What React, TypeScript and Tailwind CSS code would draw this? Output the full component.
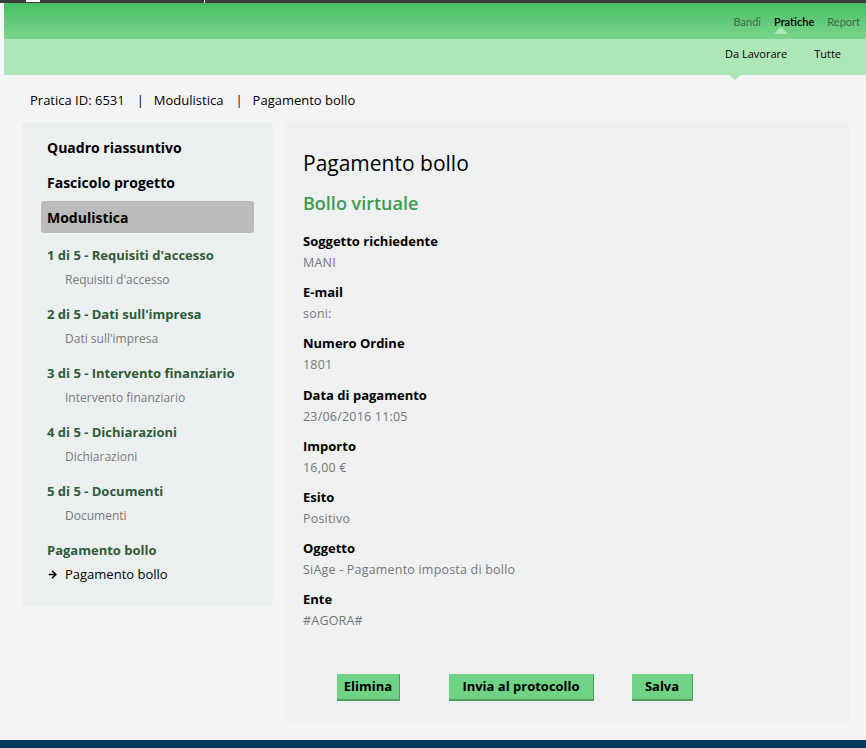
import { ArrowRight } from "lucide-react";

const font = { fontFamily: "'Open Sans', Lato, sans-serif" };

const steps = [
  { title: "1 di 5 - Requisiti d'accesso", sub: "Requisiti d'accesso" },
  { title: "2 di 5 - Dati sull'impresa", sub: "Dati sull'impresa" },
  { title: "3 di 5 - Intervento finanziario", sub: "Intervento finanziario" },
  { title: "4 di 5 - Dichiarazioni", sub: "Dichiarazioni" },
  { title: "5 di 5 - Documenti", sub: "Documenti" },
];

const fields = [
  { label: "Soggetto richiedente", value: "MANI" },
  { label: "E-mail", value: "soni:" },
  { label: "Numero Ordine", value: "1801" },
  { label: "Data di pagamento", value: "23/06/2016 11:05" },
  { label: "Importo", value: "16,00 €" },
  { label: "Esito", value: "Positivo" },
  { label: "Oggetto", value: "SiAge - Pagamento imposta di bollo" },
  { label: "Ente", value: "#AGORA#" },
];

const Header = () => (
  <header>
    {/* top dark strip */}
    <div className="relative h-[3px] bg-[#3b3d3c]">
      <div className="absolute left-[26px] top-0 h-[2px] w-[14px] bg-white" />
      <div className="absolute left-[204px] top-0 h-[6px] w-px bg-[#e8e8e8]" />
    </div>
    <div className="pl-1 bg-[#f7f7f7]">
      <div className="relative h-[36px] bg-gradient-to-b from-[#46be65] to-[#7bd58d] flex justify-end items-center pr-[6px] text-[11px]" style={{ fontFamily: "Lato, sans-serif" }}>
        <nav className="flex items-center gap-[13px] mt-[2px]">
          <a className="text-[#3d6b47]">Bandi</a>
          <a className="relative text-black font-semibold">
            Pratiche
            <span className="absolute left-[0px] top-[13px] w-0 h-0 border-l-[7px] border-r-[7px] border-b-[7px] border-l-transparent border-r-transparent border-b-[#afe6b7]" />
          </a>
          <a className="text-[#3d6b47]">Report</a>
        </nav>
      </div>
      <div className="relative h-[36px] bg-[#afe6b7] flex justify-end items-center pr-[25px] text-[11px]">
        <nav className="flex items-center gap-[27px] -mt-[6px]">
          <a className="relative text-black">
            Da Lavorare
            <span className="absolute left-[2px] top-[27px] w-0 h-0 border-l-[8px] border-r-[8px] border-t-[7px] border-l-transparent border-r-transparent border-t-[#afe6b7]" />
          </a>
          <a className="text-black">Tutte</a>
        </nav>
      </div>
    </div>
  </header>
);

const Sidebar = () => (
  <aside className="w-[251px] self-start bg-[#eceff0] rounded-[3px] px-[19px] pt-[16px] pb-[24px]">
    <div className="pl-[6px] text-[14px] font-bold text-black leading-[18px]">Quadro riassuntivo</div>
    <div className="pl-[6px] mt-[17px] text-[14px] font-bold text-black leading-[18px]">Fascicolo progetto</div>
    <div className="mt-[9px] h-[32px] bg-[#bbbbbb] rounded-[3px] flex items-center pl-[6px] text-[14px] font-bold text-black">
      Modulistica
    </div>
    <div className="pl-[6px]">
      {steps.map((s, i) => (
        <div key={s.title} className={i === 0 ? "mt-[13px]" : "mt-[16px]"}>
          <div className="text-[13px] font-bold text-[#2f5a38] leading-[18px]">{s.title}</div>
          <div className="mt-[7px] pl-[18px] text-[12px] text-[#7a7a7a] leading-[18px]">{s.sub}</div>
        </div>
      ))}
      <div className="mt-[16px]">
        <div className="text-[13px] font-bold text-[#2f5a38] leading-[18px]">Pagamento bollo</div>
        <div className="mt-[6px] flex items-center text-[13px] text-black leading-[18px]">
          <ArrowRight size={11} strokeWidth={3.5} className="mr-[7px]" />
          Pagamento bollo
        </div>
      </div>
    </div>
  </aside>
);

const Btn = ({ children, w }: { children: string; w: string }) => (
  <button
    className={`${w} h-[27px] bg-[#6fd285] border-b-2 border-r border-[#4e9e5f] text-[13px] font-bold text-black`}
  >
    {children}
  </button>
);

const Main = () => (
  <section className="w-[565px] h-[600px] bg-[#eef0f1] rounded-[3px] pl-[18px] pt-[26px] flex flex-col">
    <h1 className="text-[21px] font-medium text-black leading-[28px]">Pagamento bollo</h1>
    <h2 className="mt-[14px] text-[18px] font-semibold text-[#3f9a50] leading-[24px]">Bollo virtuale</h2>
    <div className="mt-[17px] flex flex-col gap-[12.2px]">
      {fields.map((f) => (
        <div key={f.label}>
          <div className="text-[13px] font-bold text-black leading-[18px]">{f.label}</div>
          <div className="mt-[4px] text-[12.5px] tracking-[0.2px] text-[#777] leading-[17px]">{f.value}</div>
        </div>
      ))}
    </div>
    <div className="mt-[45px] pl-[34px] flex">
      <Btn w="w-[63px]">Elimina</Btn>
      <div className="w-[49px]" />
      <Btn w="w-[145px]">Invia al protocollo</Btn>
      <div className="w-[38px]" />
      <Btn w="w-[61px]">Salva</Btn>
    </div>
  </section>
);

export default function App() {
  return (
    <div className="w-[866px] h-[748px] bg-[#f4f4f4] overflow-hidden flex flex-col" style={font}>
      <Header />
      <div className="flex-1 pl-1">
        <div className="pl-[26px] pt-[16px] text-[13px] text-black leading-[18px]">
          Pratica ID: 6531
          <span className="ml-[12px] mr-[10px]">|</span>
          Modulistica
          <span className="ml-[12px] mr-[10px]">|</span>
          Pagamento bollo
        </div>
        <div className="mt-[14px] pl-[18px] flex gap-[12px]">
          <Sidebar />
          <Main />
        </div>
      </div>
      <footer className="h-[8px] bg-[#053a5e]" />
    </div>
  );
}
